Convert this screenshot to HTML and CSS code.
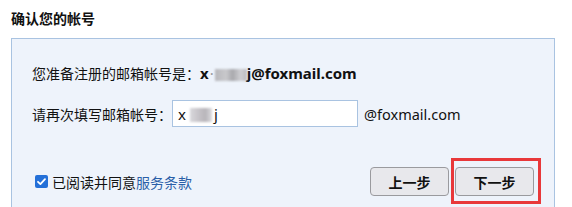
FILE: index.html
```html
<!DOCTYPE html>
<html>
<head>
<meta charset="utf-8">
<link rel="stylesheet" href="styles.css">
</head>
<body>
<h1 class="title">确认您的帐号</h1>
<div class="panel">
  <div class="row row-info">
    <span class="label">您准备注册的邮箱帐号是：</span><span class="email">x<span class="dot">·</span><span class="blur blur-bold"></span>j@foxmail.com</span>
  </div>
  <div class="row row-input">
    <span class="label">请再次填写邮箱帐号：</span>
    <div class="input"><span class="input-text">x<span class="blur blur-light"></span>j</span></div>
    <span class="suffix">@foxmail.com</span>
  </div>
  <div class="footer">
    <label class="agree">
      <span class="check"><svg width="13" height="13" viewBox="0 0 13 13"><rect x="0" y="0" width="13" height="13" rx="2" fill="#2470d8"/><path d="M3 6.8 L5.4 9.1 L10 4.2" stroke="#fff" stroke-width="1.8" fill="none" stroke-linecap="round" stroke-linejoin="round"/></svg></span>
      <span>已阅读并同意</span><a class="terms">服务条款</a>
    </label>
    <div class="buttons">
      <button class="btn">上一步</button>
      <button class="btn btn-next">下一步<span class="highlight"></span></button>
    </div>
  </div>
</div>
</body>
</html>
```
FILE: styles.css
```css
html, body {
  margin: 0;
  padding: 0;
  background: #ffffff;
  font-family: "Noto Sans", "Noto Sans CJK SC", sans-serif;
  color: #111;
}
.title {
  margin: 8px 0 10px 11px;
  font-size: 14px;
  line-height: 20px;
  font-weight: bold;
  font-family: "Noto Sans CJK SC", sans-serif;
  color: #111;
}
.panel {
  margin-left: 11px;
  width: 544px;
  height: 175px;
  background: #eef3fb;
  border: 1px solid #a9c3e1;
  border-bottom: none;
  padding: 24px 20px 0 20px;
  box-sizing: border-box;
}
.row {
  display: flex;
  align-items: center;
}
.label {
  font-family: "Noto Sans CJK SC", sans-serif;
  font-size: 14px;
  line-height: 20px;
  color: #111;
}
.row-info {
  height: 20px;
}
.email {
  font-family: "Noto Sans", sans-serif;
  font-weight: bold;
  font-size: 15px;
  line-height: 20px;
  color: #111;
  display: inline-flex;
  align-items: center;
}
.dot {
  color: #999;
  font-weight: normal;
  margin: 0 1px;
}
.blur {
  display: inline-block;
  filter: blur(1.2px);
  background: linear-gradient(90deg, #b8b8bc 0%, #c9c9cc 35%, #a9a9ad 55%, #cfcfd3 80%, #bcbcc0 100%);
}
.blur-bold {
  width: 32px;
  height: 12px;
  margin: 3px 0 0 0;
}
.blur-light {
  width: 22px;
  height: 14px;
  margin: 2px 2px 0 4px;
  background: linear-gradient(90deg, #d8d8dc 0%, #c6c3c8 40%, #b8b5ba 70%, #dcdcdf 100%);
}
.row-input {
  margin-top: 17px;
  height: 27px;
}
.input {
  margin-left: 0;
  width: 186px;
  height: 27px;
  box-sizing: border-box;
  border: 1px solid #a9c3e1;
  background: #fff;
  display: flex;
  align-items: center;
  padding-left: 5px;
}
.input-text {
  font-family: "Noto Sans", sans-serif;
  font-size: 15px;
  line-height: 20px;
  color: #111;
  display: inline-flex;
  align-items: center;
}
.suffix {
  margin-left: 6px;
  font-family: "Noto Sans", sans-serif;
  font-size: 14.5px;
  color: #111;
}
.footer {
  margin-top: 40px;
  display: flex;
  align-items: center;
  justify-content: space-between;
}
.agree {
  display: flex;
  align-items: center;
  font-family: "Noto Sans CJK SC", sans-serif;
  font-size: 14px;
  line-height: 20px;
  color: #111;
  margin-left: 3px;
}
.check {
  width: 13px;
  height: 13px;
  display: inline-block;
  margin-right: 4px;
  line-height: 0;
}
.terms {
  color: #2a5fa8;
  text-decoration: none;
}
.buttons {
  display: flex;
  gap: 6px;
}
.btn {
  position: relative;
  width: 79px;
  height: 29px;
  box-sizing: border-box;
  border: 1px solid #9a9a9e;
  border-radius: 4px;
  background: #e8e8ec;
  font-family: "Noto Sans CJK SC", sans-serif;
  font-weight: bold;
  font-size: 14px;
  color: #111;
  padding: 0;
  margin: 0;
}
.highlight {
  position: absolute;
  left: -5px;
  right: -8px;
  top: -10px;
  bottom: -9px;
  border: 3px solid #e8383a;
  pointer-events: none;
}
```
